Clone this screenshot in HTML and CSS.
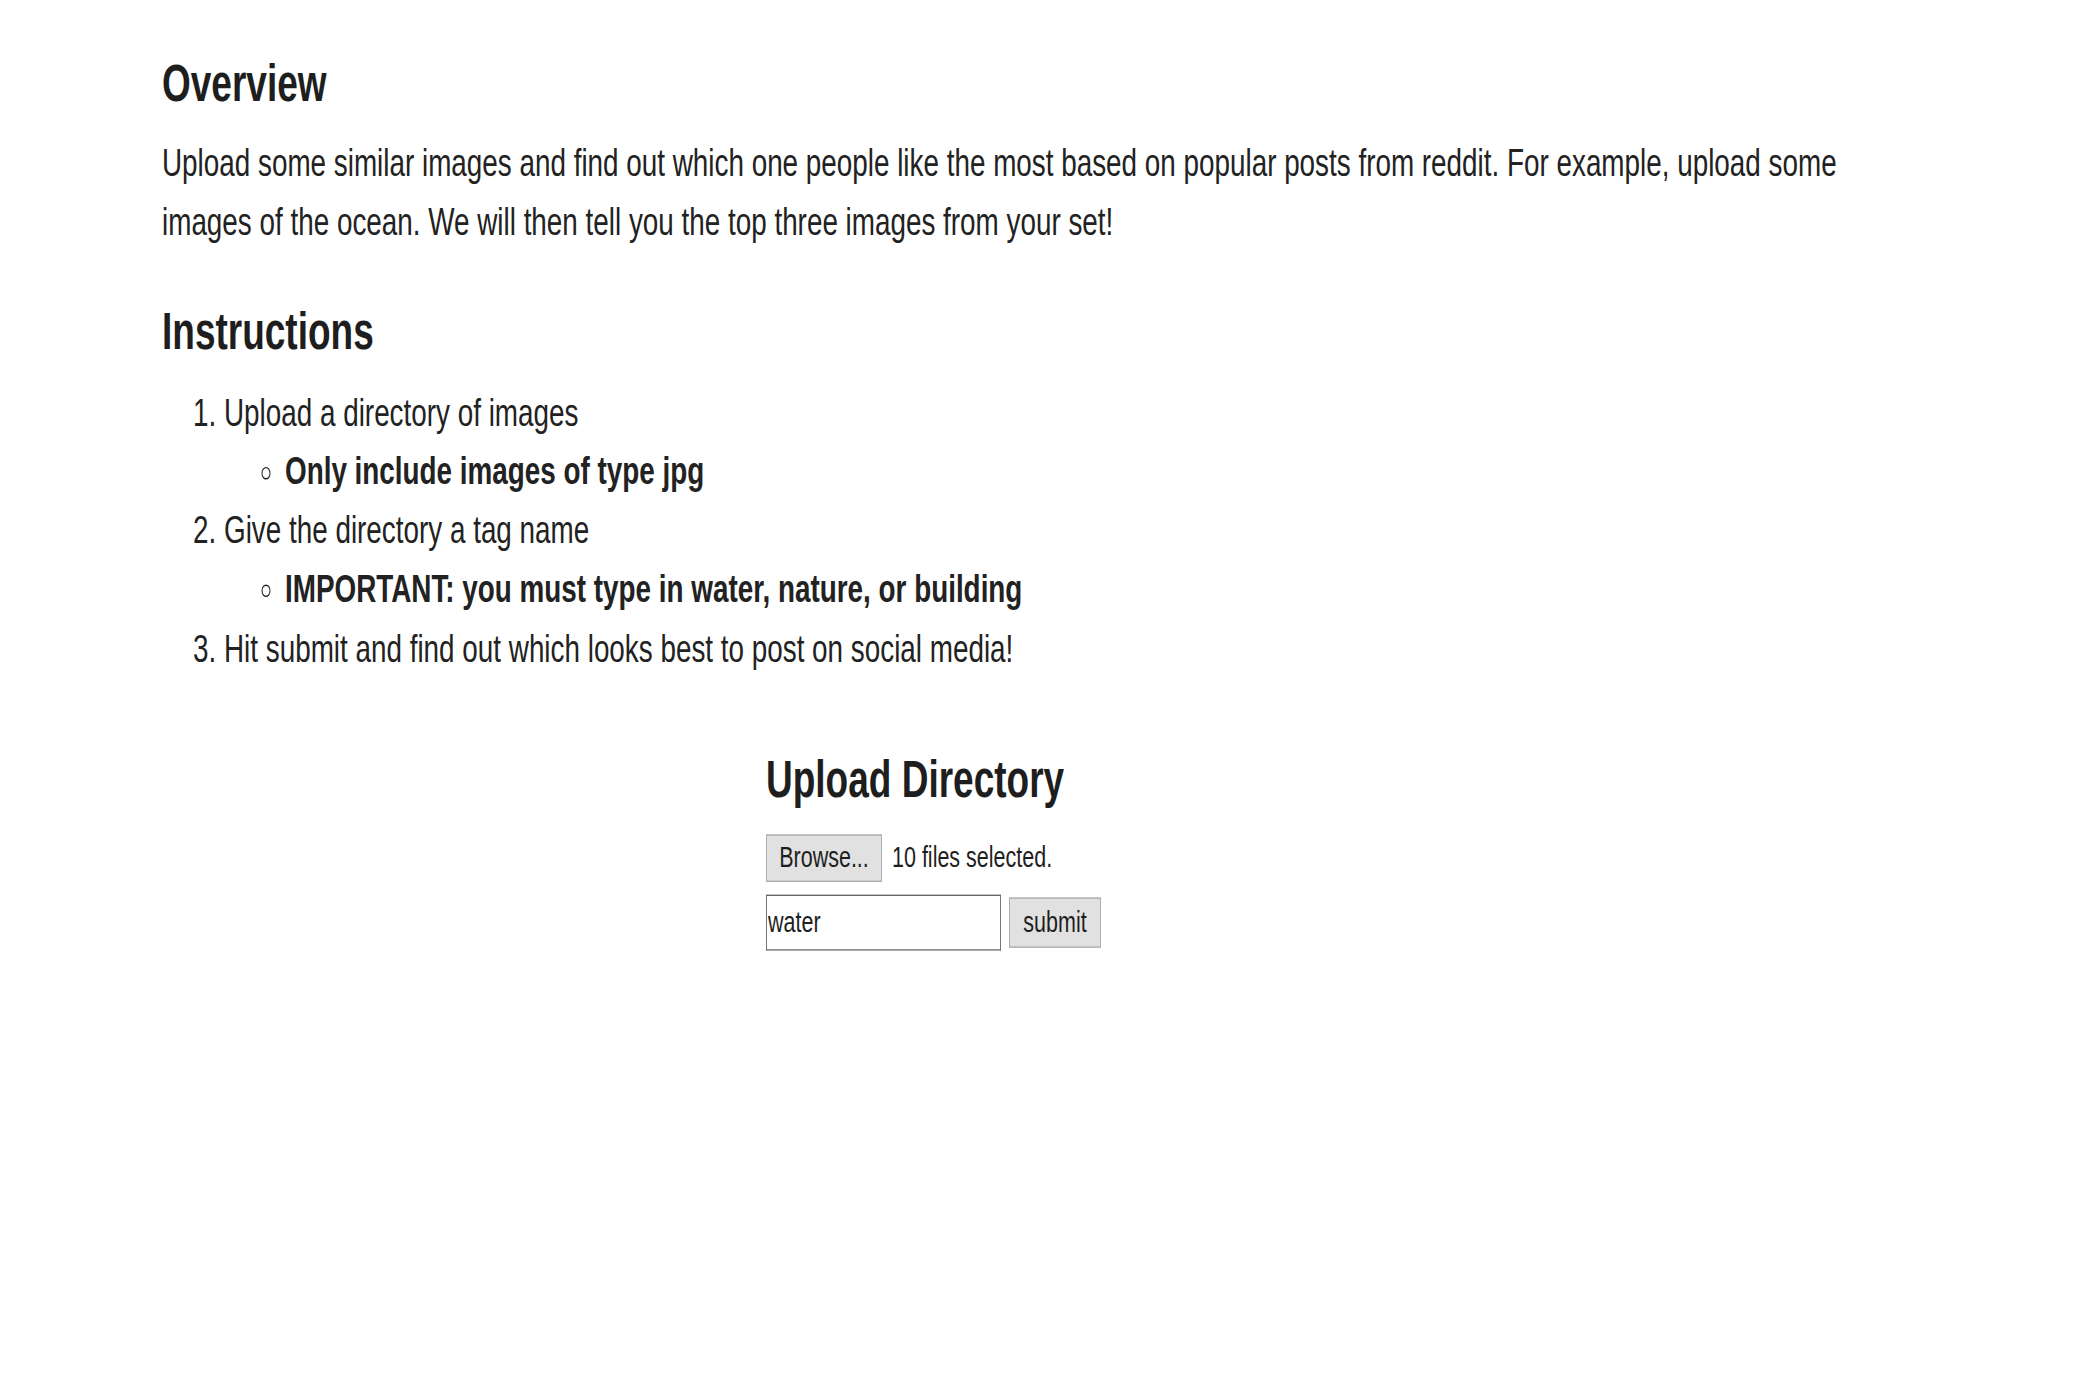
FILE: index.html
```html
<!DOCTYPE html>
<html lang="en">
<head>
<meta charset="utf-8">
<title>Upload Directory</title>
<link rel="stylesheet" href="styles.css">
</head>
<body>
<div class="page">
  <h2 class="title">Overview</h2>
  <p class="intro">Upload some similar images and find out which one people like the most based on popular posts from reddit. For example, upload some images of the ocean. We will then tell you the top three images from your set!</p>
  <h2 class="title title-instructions">Instructions</h2>
  <ol class="steps">
    <li>Upload a directory of images
      <ul class="notes">
        <li><strong>Only include images of type jpg</strong></li>
      </ul>
    </li>
    <li>Give the directory a tag name
      <ul class="notes">
        <li><strong>IMPORTANT: you must type in water, nature, or building</strong></li>
      </ul>
    </li>
    <li>Hit submit and find out which looks best to post on social media!</li>
  </ol>
  <div class="upload">
    <h2 class="title">Upload Directory</h2>
    <div class="file-row">
      <span class="btn btn-browse">Browse...</span>
      <span class="file-status">10 files selected.</span>
    </div>
    <div class="tag-row">
      <span class="tag-input">water</span>
      <span class="btn btn-submit">submit</span>
    </div>
  </div>
</div>
</body>
</html>
```
FILE: styles.css
```css
html, body {
  margin: 0;
  padding: 0;
  background: #ffffff;
}

html {
  min-height: 100%;
}

body {
  min-height: 1400px;
  font-family: "Liberation Sans", Arial, sans-serif;
  color: #222222;
}

.page {
  min-height: 990px;
  padding: 38px 0 0 162px;
  box-sizing: border-box;
  transform: scaleY(1.4);
  transform-origin: 0 0;
}

.title {
  margin: 0;
  font-size: 37px;
  line-height: 44px;
  font-weight: bold;
  color: #1e1e1e;
}

.intro {
  margin: 14px 0 0 0;
  max-width: 1730px;
  font-size: 27.85px;
  line-height: 42.1px;
}

.title-instructions {
  margin-top: 35px;
}

.steps {
  margin: 15px 0 0 0;
  padding-left: 62px;
  font-size: 27.85px;
  line-height: 42.1px;
}

.notes {
  margin: 0;
  padding-left: 61px;
  list-style-type: circle;
}

.upload {
  margin: 50px 0 0 604px;
}

.file-row {
  display: flex;
  align-items: center;
  gap: 10px;
  margin-top: 17.5px;
}

.tag-row {
  display: flex;
  align-items: center;
  gap: 8px;
  margin-top: 9.5px;
}

.btn {
  display: flex;
  align-items: center;
  justify-content: center;
  box-sizing: border-box;
  background: #e1e1e1;
  border: 1px solid #adadad;
  color: #1e1e1e;
  font-size: 21.5px;
}

.btn-browse {
  width: 116px;
  height: 33.6px;
}

.btn-submit {
  width: 92px;
  height: 36.4px;
}

.file-status {
  font-size: 21.5px;
  color: #1e1e1e;
}

.tag-input {
  display: flex;
  align-items: center;
  box-sizing: border-box;
  width: 235px;
  height: 40px;
  padding: 0 1px;
  border: 1px solid #767676;
  border-top-color: #666666;
  font-size: 21.5px;
  color: #1e1e1e;
  background: #ffffff;
}
```
